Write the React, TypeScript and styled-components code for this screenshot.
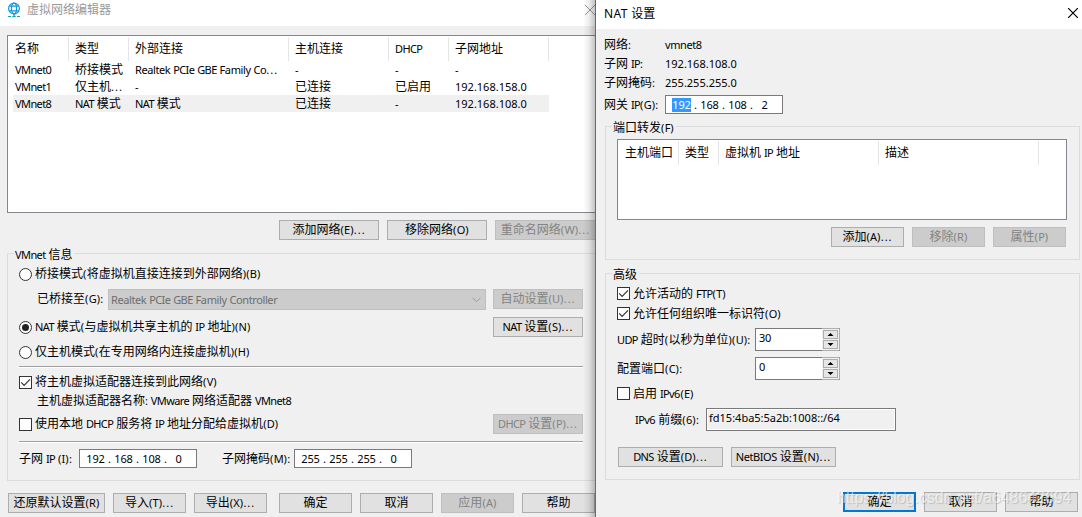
import React from "react";
import styled, { createGlobalStyle, css } from "styled-components";

const GlobalStyle = createGlobalStyle`
  *, *::before, *::after { box-sizing: border-box; }
  body {
    margin: 0;
    overflow: hidden;
    background: #f0f0f0;
    color: #000;
    font-family: "Noto Sans", "Noto Sans CJK SC", sans-serif;
    font-size: 11px;
    line-height: 16px;
  }
`;

/* ---------- text ---------- */

const TextLine = styled.span`
  display: block;
  flex: none;
  white-space: pre;
  height: 16px;
  line-height: 16px;
`;

const Han = styled.span`
  font-family: "Noto Sans CJK SC", sans-serif;
  font-size: 12px;
  line-height: 1;
`;

const Latin = styled.span<{ $ls: number }>`
  letter-spacing: ${(p) => p.$ls}px;
`;

const runPattern = /([\u4e00-\u9fff]+|\.{3}|[A-Za-z]{2,}|[()]+)/;

/* Tracking that gives each kind of Latin run its dialog-font width. */
function tracking(run: string) {
  if (run === "...") return 1;
  if (/^[()]/.test(run)) return 0.3;
  if (/^[A-Z]{2}/.test(run)) return -0.6;
  if (/^[A-Za-z]{2}/.test(run)) return -0.4;
  return 0;
}

function Text({ children, ls }: { children: string; ls?: number }) {
  return (
    <TextLine>
      {children
        .split(runPattern)
        .filter(Boolean)
        .map((run, i) =>
          /[\u4e00-\u9fff]/.test(run) ? (
            <Han key={i}>{run}</Han>
          ) : (
            <Latin key={i} $ls={ls ?? tracking(run)}>
              {run}
            </Latin>
          ),
        )}
    </TextLine>
  );
}

/* ---------- windows ---------- */

const Desktop = styled.div`
  display: flex;
  width: 1082px;
  height: 517px;
  overflow: hidden;
`;

const EditorWindow = styled.section`
  position: relative;
  flex: none;
  width: 595px;
  height: 517px;
  overflow: hidden;
  background: #f0f0f0;
`;

const DropShadow = styled.div`
  position: absolute;
  top: 0;
  right: 0;
  width: 12px;
  height: 100%;
  background: linear-gradient(to right, rgba(0, 0, 0, 0), rgba(0, 0, 0, 0.07) 50%, rgba(0, 0, 0, 0.24));
`;

const NatWindow = styled.section`
  position: relative;
  flex: none;
  width: 487px;
  height: 517px;
  border-left: 1px solid #1a7fd0;
  background: #f0f0f0;
`;

const TitleBar = styled.header<{ $h: number; $inactive?: boolean }>`
  display: flex;
  justify-content: space-between;
  height: ${(p) => p.$h}px;
  background: #fff;
  color: ${(p) => (p.$inactive ? "#999" : "#000")};
`;

const TitleText = styled.div<{ $pad: string }>`
  display: flex;
  gap: 6px;
  padding: ${(p) => p.$pad};
  font-size: 12px;
`;

const CloseIcon = styled.svg<{ $m: string }>`
  flex: none;
  width: 10px;
  height: 10px;
  margin: ${(p) => p.$m};
  stroke: currentColor;
  fill: none;
`;

const GlobeSvg = styled.svg`
  width: 14px;
  height: 16px;
  flex: none;
  fill: none;
`;

/* ---------- layout ---------- */

const Row = styled.div<{ $h: number; $mt?: number; $pl?: number; $gap?: number; $top?: boolean }>`
  display: flex;
  align-items: ${(p) => (p.$top ? "flex-start" : "center")};
  height: ${(p) => p.$h}px;
  margin-top: ${(p) => p.$mt ?? 0}px;
  padding-left: ${(p) => p.$pl ?? 0}px;
  gap: ${(p) => p.$gap ?? 0}px;
`;

const Cell = styled.div<{ $w: number; $pt?: number }>`
  display: flex;
  flex: none;
  width: ${(p) => p.$w}px;
  padding-top: ${(p) => p.$pt ?? 0}px;
`;

const InfoTable = styled.div`
  display: flex;
  flex-direction: column;
  padding: 6px 0 0 8px;
`;

const Group = styled.div<{ $w: number; $h: number; $m: string }>`
  position: relative;
  width: ${(p) => p.$w}px;
  height: ${(p) => p.$h}px;
  margin: ${(p) => p.$m};
  border: 1px solid #dcdcdc;
  display: flow-root;
`;

const Legend = styled.div<{ $x: number }>`
  position: absolute;
  top: -7px;
  left: ${(p) => p.$x}px;
  padding: 0 2px 0 1px;
  background: #f0f0f0;
`;

const Rule = styled.hr<{ $mt: number }>`
  width: 564px;
  height: 2px;
  margin: ${(p) => p.$mt}px 0 0 11px;
  border: 0;
  border-top: 1px solid #a0a0a0;
  background: #fff;
`;

/* ---------- list views ---------- */

const ListView = styled.div<{ $w: number; $h: number; $m: string }>`
  width: ${(p) => p.$w}px;
  height: ${(p) => p.$h}px;
  margin: ${(p) => p.$m};
  border: 1px solid #828790;
  background: #fff;
`;

const ListHead = styled.div`
  display: flex;
  height: 24px;
  margin-top: 1px;
`;

const HeadCell = styled.div<{ $w: number }>`
  display: flex;
  align-items: center;
  flex: none;
  width: ${(p) => p.$w}px;
  padding-left: 6px;
  border-right: 1px solid #e5e5e5;
  &:first-child {
    padding-left: 7px;
  }
`;

const ListRow = styled.div<{ $selected?: boolean }>`
  display: flex;
  align-items: center;
  width: 536px;
  height: 17px;
  margin-left: 5px;
  padding-left: 2px;
  background: ${(p) => (p.$selected ? "#f0f0f0" : "transparent")};
`;

/* ---------- controls ---------- */

const ButtonBox = styled.button<{ $w: number; $primary?: boolean }>`
  display: flex;
  flex: none;
  align-items: center;
  justify-content: center;
  width: ${(p) => p.$w}px;
  height: 20px;
  padding: 0;
  border: 1px solid #adadad;
  background: #e1e1e1;
  color: #000;
  font: inherit;
  ${(p) => p.$primary && css`border: 2px solid #0078d7;`}
  &:disabled {
    border-color: #bfbfbf;
    background: #ccc;
    color: #838383;
  }
`;

function Button(props: { w: number; label: string; disabled?: boolean; primary?: boolean }) {
  return (
    <ButtonBox $w={props.w} $primary={props.primary} disabled={props.disabled}>
      <Text>{props.label}</Text>
    </ButtonBox>
  );
}

const RadioDot = styled.span<{ $on?: boolean }>`
  display: flex;
  flex: none;
  align-items: center;
  justify-content: center;
  width: 13px;
  height: 13px;
  margin-right: 3px;
  border: 1px solid #333;
  border-radius: 50%;
  background: #fff;
  &::after {
    content: "";
    width: 7px;
    height: 7px;
    border-radius: 50%;
    background: ${(p) => (p.$on ? "#222" : "transparent")};
  }
`;

const CheckSvg = styled.svg`
  flex: none;
  width: 13px;
  height: 13px;
  margin-right: 3px;
`;

function Check({ on }: { on?: boolean }) {
  return (
    <CheckSvg viewBox="0 0 13 13">
      <rect x=".5" y=".5" width="12" height="12" fill="#fff" stroke="#333" />
      {on && <path d="M2.2 6.4 5.1 9.3 11 3.4" fill="none" stroke="#333" strokeWidth="1.2" />}
    </CheckSvg>
  );
}

const Combo = styled.div`
  display: flex;
  flex: none;
  align-items: center;
  justify-content: space-between;
  width: 378px;
  height: 21px;
  margin-right: 7px;
  padding: 0 4px 0 2px;
  border: 1px solid #bfbfbf;
  background: #ccc;
  color: #6d6d6d;
`;

const ComboArrow = styled.svg`
  width: 9px;
  height: 6px;
  fill: none;
  stroke: #9a9a9a;
`;

const IpBox = styled.div`
  display: flex;
  flex: none;
  align-items: center;
  width: 118px;
  height: 19px;
  padding-left: 4px;
  border: 1px solid #7a7a7a;
  background: #fff;
`;

const Octet = styled.div<{ $selected?: boolean }>`
  display: flex;
  justify-content: center;
  width: 23px;
  &:last-child {
    width: 21px;
  }
  > ${TextLine} {
    padding: 0 0.5px;
    height: 14px;
    line-height: 14px;
    background: ${(p) => (p.$selected ? "#3399ff" : "transparent")};
    color: ${(p) => (p.$selected ? "#fff" : "#000")};
  }
`;

const IpDot = styled.span`
  width: 5px;
  text-align: center;
`;

function IpField({ value, selected }: { value: string[]; selected?: number }) {
  return (
    <IpBox>
      {value.map((octet, i) => (
        <React.Fragment key={i}>
          {i > 0 && <IpDot>.</IpDot>}
          <Octet $selected={selected === i}>
            <Text ls={-0.2}>{octet}</Text>
          </Octet>
        </React.Fragment>
      ))}
    </IpBox>
  );
}

const SpinBox = styled.div`
  display: flex;
  flex: none;
  width: 85px;
  height: 23px;
  border: 1px solid #7a7a7a;
  border-right-color: #adadad;
  background: #fff;
`;

const SpinValue = styled.div`
  width: 66px;
  padding: 1px 0 0 3px;
`;

const SpinButtons = styled.div`
  display: flex;
  flex-direction: column;
  gap: 1px;
  width: 17px;
  margin: -1px 0;
  padding: 1px;
  border-top: 1px solid #adadad;
  border-bottom: 1px solid #adadad;
  background: #f0f0f0;
`;

const SpinArrow = styled.svg`
  display: block;
  flex: none;
  width: 15px;
  height: 9px;
  border: 1px solid #adadad;
  background: #e6e6e6;
`;

function Spinner({ value }: { value: string }) {
  return (
    <SpinBox>
      <SpinValue>
        <Text ls={-0.2}>{value}</Text>
      </SpinValue>
      <SpinButtons>
        <SpinArrow viewBox="0 0 13 7">
          <path d="M6.5 2 9.5 5H3.5Z" />
        </SpinArrow>
        <SpinArrow viewBox="0 0 13 7">
          <path d="M6.5 5 9.5 2H3.5Z" />
        </SpinArrow>
      </SpinButtons>
    </SpinBox>
  );
}

const PrefixField = styled.div`
  flex: none;
  width: 190px;
  height: 23px;
  padding: 1px 0 0 2px;
  border: 1px solid #7a7a7a;
  box-shadow: inset 0 0 0 1px #fff;
`;

const Watermark = styled.div`
  position: absolute;
  left: 241px;
  top: 487px;
  font: 16px/22px "Liberation Sans", Arial, sans-serif;
  letter-spacing: -0.07px;
  white-space: nowrap;
  color: rgba(255, 255, 255, 0.6);
  text-shadow: 1px 1px 1px rgba(0, 0, 0, 0.16);
`;

/* ---------- data ---------- */

const columns: [string, number][] = [
  ["名称", 60],
  ["类型", 60],
  ["外部连接", 160],
  ["主机连接", 100],
  ["DHCP", 60],
  ["子网地址", 100],
];

const networks = [
  ["VMnet0", "桥接模式", "Realtek PCIe GBE Family Co...", "-", "-", "-"],
  ["VMnet1", "仅主机...", "-", "已连接", "已启用", "192.168.158.0"],
  ["VMnet8", "NAT 模式", "NAT 模式", "已连接", "-", "192.168.108.0"],
];

const natInfo = [
  ["网络:", "vmnet8"],
  ["子网 IP:", "192.168.108.0"],
  ["子网掩码:", "255.255.255.0"],
];

function Globe() {
  return (
    <GlobeSvg viewBox="0 0 14 16">
      <g stroke="#1296db" strokeWidth="1.2">
        <circle cx="7" cy="6.5" r="5.4" />
        <ellipse cx="7" cy="6.5" rx="2.5" ry="5.4" />
        <path d="M2.2 4.2H11.8M2.2 8.8H11.8M7 12V14" />
      </g>
      <path d="M1 14.5H4M5.3 14.5H8.7M10 14.5H13" stroke="#13a89e" strokeWidth="1.2" />
    </GlobeSvg>
  );
}

/* ---------- app ---------- */

function NetworkEditor() {
  return (
    <EditorWindow>
      <TitleBar $h={26} $inactive>
        <TitleText $pad="2px 0 0 7px">
          <Globe />
          <Text>虚拟网络编辑器</Text>
        </TitleText>
        <CloseIcon $m="5px 0 0 0" viewBox="0 0 10 10">
          <path d="M0 0 10 10M10 0 0 10" />
        </CloseIcon>
      </TitleBar>

      <ListView $w={600} $h={178} $m="9px 0 0 7px">
        <ListHead>
          {columns.map(([name, w], i) => (
            <HeadCell key={name} $w={i === 0 ? w + 1 : w}>
              <Text>{name}</Text>
            </HeadCell>
          ))}
        </ListHead>
        {networks.map((net, r) => (
          <ListRow key={net[0]} $selected={r === 2}>
            {net.map((value, i) => (
              <Cell key={i} $w={columns[i][1]}>
                <Text>{value}</Text>
              </Cell>
            ))}
          </ListRow>
        ))}
      </ListView>

      <Row $h={20} $mt={7} $pl={279} $gap={8}>
        <Button w={100} label="添加网络(E)..." />
        <Button w={100} label="移除网络(O)" />
        <Button w={101} label="重命名网络(W)..." disabled />
      </Row>

      <Group $w={600} $h={228} $m="13px 0 0 7px">
        <Legend $x={6}>
          <Text>VMnet 信息</Text>
        </Legend>
        <Row $h={16} $mt={12} $pl={11}>
          <RadioDot />
          <Text>桥接模式(将虚拟机直接连接到外部网络)(B)</Text>
        </Row>
        <Row $h={21} $mt={7} $pl={29} $top>
          <Cell $w={71} $pt={2}>
            <Text>已桥接至(G):</Text>
          </Cell>
          <Combo>
            <Text>Realtek PCIe GBE Family Controller</Text>
            <ComboArrow viewBox="0 0 9 6">
              <path d="M.5 .8 4.5 4.8 8.5 .8" />
            </ComboArrow>
          </Combo>
          <Button w={90} label="自动设置(U)..." disabled />
        </Row>
        <Row $h={20} $mt={7} $pl={11}>
          <RadioDot $on />
          <Cell $w={458}>
            <Text>NAT 模式(与虚拟机共享主机的 IP 地址)(N)</Text>
          </Cell>
          <Button w={90} label="NAT 设置(S)..." />
        </Row>
        <Row $h={16} $mt={7} $pl={11}>
          <RadioDot />
          <Text>仅主机模式(在专用网络内连接虚拟机)(H)</Text>
        </Row>
        <Rule $mt={6} />
        <Row $h={16} $mt={6} $pl={11}>
          <Check on />
          <Text>将主机虚拟适配器连接到此网络(V)</Text>
        </Row>
        <Row $h={16} $mt={3} $pl={29}>
          <Text>主机虚拟适配器名称: VMware 网络适配器 VMnet8</Text>
        </Row>
        <Row $h={20} $mt={5} $pl={11}>
          <Check />
          <Cell $w={458}>
            <Text>使用本地 DHCP 服务将 IP 地址分配给虚拟机(D)</Text>
          </Cell>
          <Button w={90} label="DHCP 设置(P)..." disabled />
        </Row>
        <Rule $mt={7} />
        <Row $h={19} $mt={6} $pl={11}>
          <Cell $w={60}>
            <Text>子网 IP (I):</Text>
          </Cell>
          <IpField value={["192", "168", "108", "0"]} />
          <Row $h={19} $pl={25}>
            <Cell $w={72}>
              <Text>子网掩码(M):</Text>
            </Cell>
          </Row>
          <IpField value={["255", "255", "255", "0"]} />
        </Row>
      </Group>

      <Row $h={20} $mt={12} $pl={8} $gap={8}>
        <Button w={97} label="还原默认设置(R)" />
        <Button w={73} label="导入(T)..." />
        <Button w={73} label="导出(X)..." />
        <Row $h={20} $pl={4} $gap={8}>
          <Button w={73} label="确定" />
          <Button w={73} label="取消" />
          <Button w={73} label="应用(A)" disabled />
          <Button w={73} label="帮助" />
        </Row>
      </Row>
      <DropShadow />
    </EditorWindow>
  );
}

function NatSettings() {
  return (
    <NatWindow>
      <TitleBar $h={29}>
        <TitleText $pad="6px 0 0 8px">
          <Text ls={0.4}>NAT 设置</Text>
        </TitleText>
        <CloseIcon $m="8px 4px 0 0" viewBox="0 0 10 10">
          <path d="M0 0 10 10M10 0 0 10" strokeWidth="1.2" />
        </CloseIcon>
      </TitleBar>

      <InfoTable>
        {natInfo.map(([label, value]) => (
          <Row key={label} $h={19}>
            <Cell $w={61}>
              <Text>{label}</Text>
            </Cell>
            <Text>{value}</Text>
          </Row>
        ))}
      </InfoTable>
      <Row $h={19} $mt={3} $pl={8}>
        <Cell $w={61}>
          <Text>网关 IP(G):</Text>
        </Cell>
        <IpField value={["192", "168", "108", "2"]} selected={0} />
      </Row>

      <Group $w={475} $h={134} $m="12px 0 0 9px">
        <Legend $x={6}>
          <Text>端口转发(F)</Text>
        </Legend>
        <ListView $w={450} $h={81} $m="12px 0 0 11px">
          <ListHead>
            <HeadCell $w={61}>
              <Text>主机端口</Text>
            </HeadCell>
            <HeadCell $w={40}>
              <Text>类型</Text>
            </HeadCell>
            <HeadCell $w={160}>
              <Text>虚拟机 IP 地址</Text>
            </HeadCell>
            <HeadCell $w={160}>
              <Text>描述</Text>
            </HeadCell>
          </ListHead>
        </ListView>
        <Row $h={20} $mt={7} $pl={225} $gap={8}>
          <Button w={73} label="添加(A)..." />
          <Button w={73} label="移除(R)" disabled />
          <Button w={73} label="属性(P)" disabled />
        </Row>
      </Group>

      <Group $w={475} $h={207} $m="13px 0 0 9px">
        <Legend $x={6}>
          <Text>高级</Text>
        </Legend>
        <Row $h={19} $mt={10} $pl={11}>
          <Check on />
          <Text>允许活动的 FTP(T)</Text>
        </Row>
        <Row $h={19} $mt={1} $pl={11}>
          <Check on />
          <Text>允许任何组织唯一标识符(O)</Text>
        </Row>
        <Row $h={23} $mt={5} $pl={11}>
          <Cell $w={138} $pt={1}>
            <Text>UDP 超时(以秒为单位)(U):</Text>
          </Cell>
          <Spinner value="30" />
        </Row>
        <Row $h={23} $mt={6} $pl={11}>
          <Cell $w={138} $pt={1}>
            <Text>配置端口(C):</Text>
          </Cell>
          <Spinner value="0" />
        </Row>
        <Row $h={17} $mt={5} $pl={11}>
          <Check />
          <Text>启用 IPv6(E)</Text>
        </Row>
        <Row $h={23} $mt={6} $pl={29}>
          <Cell $w={71} $pt={1}>
            <Text>IPv6 前缀(6):</Text>
          </Cell>
          <PrefixField>
            <Text ls={0}>fd15:4ba5:5a2b:1008::/64</Text>
          </PrefixField>
        </Row>
        <Row $h={20} $mt={16} $pl={12} $gap={8}>
          <Button w={105} label="DNS 设置(D)..." />
          <Button w={105} label="NetBIOS 设置(N)..." />
        </Row>
      </Group>

      <Row $h={20} $mt={12} $pl={247} $gap={8}>
        <Button w={73} label="确定" primary />
        <Button w={73} label="取消" />
        <Button w={73} label="帮助" />
      </Row>
      <Watermark>https://blog.csdn.net/a648642694</Watermark>
    </NatWindow>
  );
}

export default function App() {
  return (
    <>
      <GlobalStyle />
      <Desktop>
        <NetworkEditor />
        <NatSettings />
      </Desktop>
    </>
  );
}
